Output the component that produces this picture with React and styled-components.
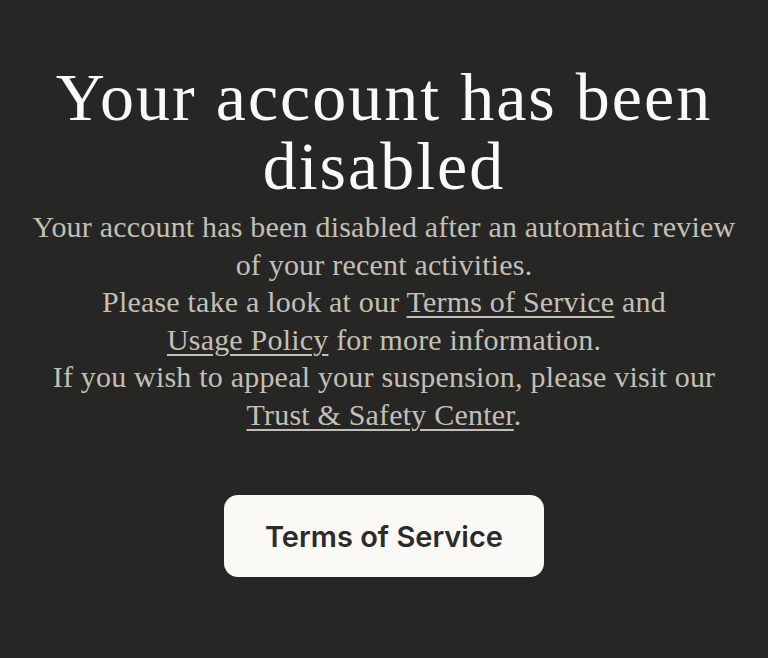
import React from "react";
import styled, { createGlobalStyle } from "styled-components";

const GlobalStyle = createGlobalStyle`
  html, body {
    margin: 0;
    padding: 0;
    background: #262624;
  }
  body {
    font-family: "Liberation Serif", serif;
  }
`;

const Page = styled.main`
  min-height: 658px;
  box-sizing: border-box;
  display: flex;
  flex-direction: column;
  align-items: center;
  padding: 63px 10px 0;
  background: #262624;
  text-align: center;
`;

const Title = styled.h1`
  margin: 0;
  font-family: "Liberation Serif", serif;
  font-weight: 400;
  font-size: 68px;
  line-height: 69px;
  letter-spacing: 2px;
  color: #faf9f5;
  max-width: 720px;
`;

const Body = styled.p`
  margin: 7px 0 0;
  font-family: "Liberation Serif", serif;
  font-size: 30px;
  line-height: 37.5px;
  letter-spacing: 0.2px;
  color: #c2c0b6;
`;

const Line = styled.span`
  display: block;
`;

const Link = styled.a`
  color: inherit;
  text-decoration: underline;
  text-underline-offset: 4px;
  text-decoration-thickness: 1.5px;
`;

const Button = styled.button`
  margin-top: 62px;
  width: 320px;
  height: 82px;
  border: none;
  border-radius: 14px;
  background: #faf9f5;
  color: #2b2b29;
  font-family: "Inter", "Liberation Sans", sans-serif;
  font-weight: 600;
  font-size: 29px;
  cursor: pointer;
`;

export default function App() {
  return (
    <>
      <GlobalStyle />
      <Page>
        <Title>Your account has been disabled</Title>
        <Body>
          <Line>Your account has been disabled after an automatic review</Line>
          <Line>of your recent activities.</Line>
          <Line>
            Please take a look at our <Link href="#">Terms of Service</Link> and
          </Line>
          <Line>
            <Link href="#">Usage Policy</Link> for more information.
          </Line>
          <Line>If you wish to appeal your suspension, please visit our</Line>
          <Line>
            <Link href="#">Trust &amp; Safety Center</Link>.
          </Line>
        </Body>
        <Button>Terms of Service</Button>
      </Page>
    </>
  );
}
